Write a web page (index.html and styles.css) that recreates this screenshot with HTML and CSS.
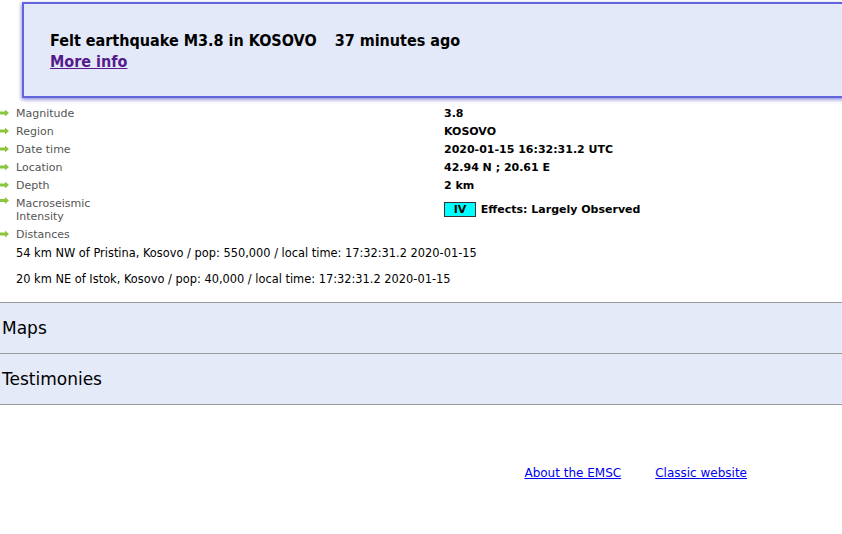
FILE: index.html
```html
<!DOCTYPE html>
<html lang="en">
<head>
    <meta charset="UTF-8">
    <meta name="viewport" content="width=device-width, initial-scale=1.0">
    <title>M3.8 KOSOVO - 2020-01-15 16:32:31 UTC</title>
    <link rel="stylesheet" href="styles.css">
</head>
<body>
    <div class="felt-popup">
        <p class="felt-title">Felt earthquake M3.8 in KOSOVO <span class="ago">37 minutes ago</span></p>
        <a class="felt-link" href="#">More info</a>
    </div>

    <div class="content">
        <div class="details">
            <div class="row"><span class="arrow"></span><span class="label">Magnitude</span><span class="value">3.8</span></div>
            <div class="row"><span class="arrow"></span><span class="label">Region</span><span class="value">KOSOVO</span></div>
            <div class="row"><span class="arrow"></span><span class="label">Date time</span><span class="value">2020-01-15 16:32:31.2 UTC</span></div>
            <div class="row"><span class="arrow"></span><span class="label">Location</span><span class="value">42.94 N ; 20.61 E</span></div>
            <div class="row"><span class="arrow"></span><span class="label">Depth</span><span class="value">2 km</span></div>
            <div class="row tall"><span class="arrow"></span><span class="label">Macroseismic<br>Intensity</span><span class="value"><span class="intensity">IV</span> Effects: Largely Observed</span></div>
            <div class="row"><span class="arrow"></span><span class="label">Distances</span></div>
        </div>
        <p class="distance">54 km NW of Pristina, Kosovo / pop: 550,000 / local time: 17:32:31.2 2020-01-15</p>
        <p class="distance">20 km NE of Istok, Kosovo / pop: 40,000 / local time: 17:32:31.2 2020-01-15</p>

        <div class="sections">
            <div class="section">Maps</div>
            <div class="section">Testimonies</div>
        </div>

        <div class="footer">
            <a href="#">About the EMSC</a>
            <a href="#">Classic website</a>
        </div>
    </div>
</body>
</html>
```

FILE: styles.css
```css
html {
    overflow-x: hidden;
}
body {
    margin: 0;
    font-family: "DejaVu Sans", Verdana, sans-serif;
    color: #000;
    background: #fff;
}
.felt-popup {
    position: absolute;
    top: 2px;
    left: 22px;
    right: -10px;
    height: 92px;
    padding: 0 26px;
    background: #e3e9f8;
    border: 2px solid #6464dc;
    box-shadow: 0 2px 4px rgba(80, 80, 200, 0.45), -1px 1px 3px rgba(80, 80, 200, 0.3);
    z-index: 10;
}
.felt-title {
    margin: 27px 0 0;
    font-size: 16px;
    font-stretch: condensed;
    font-weight: bold;
}
.felt-title .ago {
    margin-left: 13px;
}
.felt-link {
    display: inline-block;
    margin-top: 2px;
    font-size: 16px;
    font-stretch: condensed;
    font-weight: bold;
    color: #551a8b;
}
.content {
    padding-top: 104px;
}
.details {
    display: flex;
    flex-direction: column;
}
.row {
    display: grid;
    grid-template-columns: 16px 428px 1fr;
    align-items: center;
    height: 18px;
    font-size: 11px;
}
.row.tall {
    height: 31px;
    line-height: 13px;
}
.row.tall .arrow {
    align-self: start;
    margin-top: 3px;
}
.arrow {
    width: 9px;
    height: 7px;
    background: #8cc63f;
    clip-path: polygon(0 30%, 55% 30%, 55% 0, 100% 50%, 55% 100%, 55% 70%, 0 70%);
}
.label {
    color: #555;
}
.value {
    font-weight: bold;
}
.intensity {
    display: inline-block;
    width: 30px;
    line-height: 13px;
    margin-right: 1px;
    text-align: center;
    background: #00ffff;
    border: 1px solid #333;
}
.distance {
    margin: 0 0 12px 16px;
    font-size: 11.4px;
    line-height: 14px;
}
.distance:first-of-type {
    margin-top: 3px;
}
.sections {
    margin-top: 16px;
}
.section {
    height: 50px;
    line-height: 50px;
    padding-left: 2px;
    font-size: 17px;
    background: #e4eaf8;
    border-top: 1px solid #9a9a9a;
}
.section:last-child {
    border-bottom: 1px solid #9a9a9a;
}
.footer {
    display: flex;
    justify-content: flex-end;
    gap: 34px;
    padding: 61px 95px 0 0;
    font-size: 12px;
}
.footer a {
    color: #0000ee;
}
```
